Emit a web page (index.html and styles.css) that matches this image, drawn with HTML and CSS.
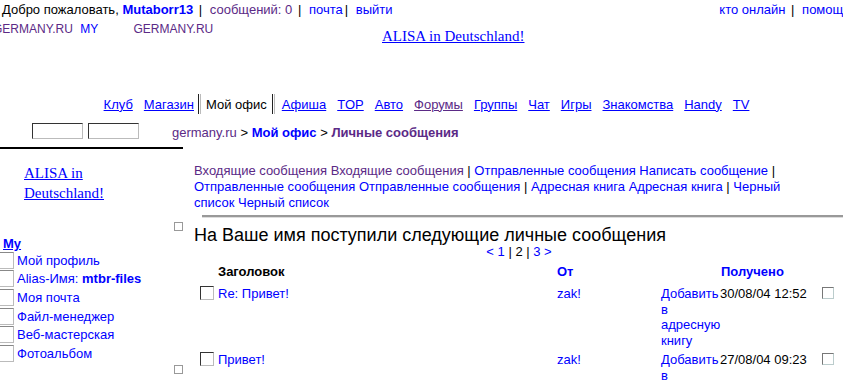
FILE: index.html
```html
<!DOCTYPE html>
<html lang="ru">
<head>
    <meta charset="UTF-8">
    <title>germany.ru - Личные сообщения</title>
    <link rel="stylesheet" href="styles.css">
</head>
<body>
<div class="page">

    <div class="topbar">
        <div class="userline">
            Добро пожаловать, <a class="user" href="#">Mutaborr13</a>
            <span class="bar">|</span> <a class="visited" href="#">сообщений: 0</a>
            <span class="bar">|</span> <a href="#">почта</a><span class="bar">|</span> <a href="#">выйти</a>
        </div>
        <div class="helpline">
            <a href="#">кто онлайн</a> <span class="bar">|</span> <a href="#">помощь</a>
        </div>
    </div>

    <div class="header">
        <div class="logos">
            <span class="alt visited cut">GERMANY.RU</span>
            <span class="alt">MY</span>
            <span class="alt visited gap">GERMANY.RU</span>
        </div>
        <a class="banner" href="#">ALISA in Deutschland!</a>
    </div>

    <div class="nav">
        <a href="#">Клуб</a>
        <a href="#">Магазин</a>
        <span class="cur-group">
            <span class="sep"></span>
            <span class="current">Мой офис</span>
            <span class="sep"></span>
        </span>
        <a href="#">Афиша</a>
        <a href="#">TOP</a>
        <a href="#">Авто</a>
        <a class="visited" href="#">Форумы</a>
        <a href="#">Группы</a>
        <a href="#">Чат</a>
        <a href="#">Игры</a>
        <a href="#">Знакомства</a>
        <a href="#">Handy</a>
        <a href="#">TV</a>
    </div>

    <div class="searchrow">
        <input class="field" type="text">
        <input class="field" type="text">
        <div class="crumbs">
            <a class="visited" href="#">germany.ru</a> &gt;
            <a class="strong" href="#">Мой офис</a> &gt;
            <span class="strong visited">Личные сообщения</span>
        </div>
    </div>

    <div class="main">
        <div class="side">
            <a class="banner side-banner" href="#">ALISA in Deutschland!</a>
            <span class="pix"></span>
            <a class="my" href="#">My</a>
            <ul class="menu">
                <li><span class="ico"></span><a href="#">Мой профиль</a></li>
                <li><span class="ico"></span><a href="#">Alias-Имя: <b>mtbr-files</b></a></li>
                <li><span class="ico"></span><a href="#">Моя почта</a></li>
                <li><span class="ico"></span><a href="#">Файл-менеджер</a></li>
                <li><span class="ico"></span><a href="#">Веб-мастерская</a></li>
                <li><span class="ico"></span><a href="#">Фотоальбом</a></li>
            </ul>
            <span class="pix"></span>
        </div>

        <div class="content">
            <div class="tabs">
                <a class="visited" href="#">Входящие сообщения Входящие сообщения</a> |
                <a href="#">Отправленные сообщения Написать сообщение</a> |
                <a href="#">Отправленные сообщения Отправленные сообщения</a> |
                <a href="#">Адресная книга Адресная книга</a> |
                <a href="#">Черный список Черный список</a>
            </div>
            <div class="rule"></div>
            <h1>На Ваше имя поступили следующие личные сообщения</h1>
            <div class="pager">
                <a href="#">&lt; 1</a> | 2 | <a href="#">3 &gt;</a>
            </div>

            <div class="msgs">
                <div class="row head">
                    <span></span>
                    <span class="th">Заголовок</span>
                    <span class="th blue">От</span>
                    <span></span>
                    <span class="th blue">Получено</span>
                    <span></span>
                </div>
                <div class="row">
                    <span class="box"></span>
                    <a href="#">Re: Привет!</a>
                    <a href="#">zak!</a>
                    <a class="add" href="#">Добавить в адресную книгу</a>
                    <span class="date">30/08/04 12:52</span>
                    <span class="box small"></span>
                </div>
                <div class="row">
                    <span class="box"></span>
                    <a href="#">Привет!</a>
                    <a href="#">zak!</a>
                    <a class="add" href="#">Добавить в адресную книгу</a>
                    <span class="date">27/08/04 09:23</span>
                    <span class="box small"></span>
                </div>
            </div>
        </div>
    </div>

</div>
</body>
</html>
```

FILE: styles.css
```css
body {
    margin: 0;
    font-family: 'Liberation Sans', Arial, sans-serif;
    font-size: 13px;
    color: #000;
    background: #fff;
    overflow: hidden;
}

a {
    color: #0000ff;
    text-decoration: none;
}

.visited,
a.visited {
    color: #5b2a86;
}

.page {
    width: 850px;
}

/* top user bar */
.topbar {
    display: flex;
    justify-content: space-between;
    height: 19px;
    line-height: 19px;
    padding-left: 2px;
}

.user {
    font-weight: bold;
}

.bar {
    margin: 0 4px 0 2px;
}

/* logo row */
.header {
    display: flex;
    height: 74px;
}

.logos {
    width: 382px;
    font-size: 12px;
    line-height: 20px;
    white-space: nowrap;
}

.alt {
    color: #0000ff;
    margin-right: 4px;
}

.alt.visited {
    color: #5b2a86;
}

.cut {
    margin-left: -7px;
}

.gap {
    margin-left: 28px;
}

.banner {
    font-family: 'Liberation Serif', 'Times New Roman', serif;
    font-size: 15px;
    text-decoration: underline;
    line-height: 20px;
}

.header .banner {
    margin-top: 7px;
    align-self: flex-start;
}

/* section navigation */
.nav {
    display: flex;
    align-items: center;
    justify-content: center;
    gap: 11px;
    height: 22px;
    padding-left: 3px;
}

.nav a {
    text-decoration: underline;
}

.cur-group {
    display: flex;
    align-items: center;
    gap: 5px;
    margin: 0 -4px 0 -7px;
}

.sep {
    width: 1px;
    height: 20px;
    border-left: 1px solid #222;
    border-right: 1px solid #bbb;
}

/* search + breadcrumbs */
.searchrow {
    display: flex;
    align-items: center;
    height: 32px;
    padding-left: 32px;
    gap: 5px;
}

.field {
    width: 51px;
    height: 16px;
    box-sizing: border-box;
    margin: 0;
    padding: 0;
    border: 1px solid;
    border-color: #333 #bbb #bbb #333;
}

.crumbs {
    margin: 3px 0 0 28px;
}

.strong {
    font-weight: bold;
}

/* main two-column area */
.main {
    display: flex;
    gap: 11px;
}

.side {
    width: 183px;
    border-top: 2px solid #000;
    border-bottom: 2px solid #000;
    display: flex;
    flex-direction: column;
    padding-bottom: 3px;
}

.side-banner {
    width: 90px;
    margin: 14px 0 0 24px;
}

.pix {
    align-self: flex-end;
    width: 9px;
    height: 9px;
    box-sizing: border-box;
    border: 1px solid #999;
    margin: 19px 0 0;
}

.side .pix:last-child {
    margin-top: 2px;
}

.my {
    font-weight: bold;
    text-decoration: underline;
    margin: 6px 0 0 3px;
    line-height: 14px;
}

.menu {
    list-style: none;
    margin: 0;
    padding: 0;
}

.menu li {
    display: flex;
    align-items: center;
    gap: 3px;
    height: 18.6px;
}

.ico {
    width: 15px;
    height: 17px;
    box-sizing: border-box;
    border: 1px solid;
    border-color: #888 #bbb #bbb #777;
    margin-left: -1px;
}

.content {
    flex: 1;
    padding-top: 16px;
}

.tabs {
    line-height: 16px;
    width: 600px;
}

.rule {
    height: 2px;
    background: #999;
    border-bottom: 1px solid #ddd;
    margin: 4px 0 0 8px;
}

h1 {
    font-size: 18px;
    font-weight: normal;
    margin: 7px 0 0;
    line-height: 20px;
}

.pager {
    width: 650px;
    text-align: center;
    line-height: 13px;
}

.msgs {
    margin: 6px 0 0 6px;
    width: 642px;
}

.row {
    display: grid;
    grid-template-columns: 18px 339px 104px 57px 104px 20px;
    line-height: 15.5px;
    height: 66px;
    align-items: start;
}

.row.head {
    height: 22px;
}

.th {
    font-weight: bold;
}

.th.blue {
    color: #0000ff;
}

.row.head .th:nth-child(5) {
    padding-left: 3px;
}

.box {
    width: 14px;
    height: 14px;
    box-sizing: border-box;
    border: 1px solid;
    border-color: #333 #bbb #bbb #333;
}

.box.small {
    width: 12px;
    height: 12px;
    border-color: #777 #bcc #bcc #777;
    margin-top: 1px;
}

.date {
    padding-left: 2px;
}
```
